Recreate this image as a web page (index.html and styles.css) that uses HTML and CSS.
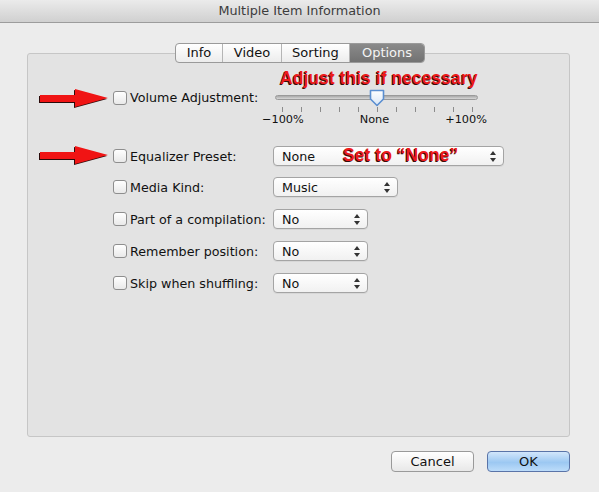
FILE: index.html
```html
<!DOCTYPE html>
<html>
<head>
<meta charset="utf-8">
<link rel="stylesheet" href="styles.css">
</head>
<body>
<div class="window">
  <div class="titlebar">Multiple Item Information</div>
  <div class="content">
    <div class="tabs">
      <div class="tab t-info">Info</div>
      <div class="tab t-video">Video</div>
      <div class="tab t-sort">Sorting</div>
      <div class="tab t-opt selected">Options</div>
    </div>
    <div class="panel">
      <div class="note note-vol">Adjust this if necessary</div>
      <div class="note note-eq">Set to “None”</div>
      <svg class="arrow arrow-1" width="72" height="22" viewBox="0 0 72 22"><path d="M2 8 L37 8 L37 2 L70 11 L37 20 L37 15 L2 15 Z" fill="#2a0a0a"/><path d="M3 7 L38 7 L38 1 L71 10 L38 19 L38 14 L3 14 Z" fill="#f01414"/></svg>
      <svg class="arrow arrow-2" width="72" height="22" viewBox="0 0 72 22"><path d="M2 8 L37 8 L37 2 L70 11 L37 20 L37 15 L2 15 Z" fill="#2a0a0a"/><path d="M3 7 L38 7 L38 1 L71 10 L38 19 L38 14 L3 14 Z" fill="#f01414"/></svg>

      <div class="row row-vol">
        <span class="check"></span>
        <span class="label">Volume Adjustment:</span>
        <div class="slider">
          <div class="track-area">
            <div class="track"></div>
            <svg class="thumb" width="18" height="18" viewBox="0 0 18 18"><defs><linearGradient id="tg" x1="0" y1="0" x2="0" y2="1"><stop offset="0" stop-color="#ffffff"/><stop offset="1" stop-color="#d8e6f6"/></linearGradient></defs><path d="M2.5 1.5 H15.5 V10 L9 16.5 L2.5 10 Z" fill="url(#tg)" stroke="#5b8fd1" stroke-width="1.6" stroke-linejoin="round"/></svg>
          </div>
          <div class="ticks">
            <i></i><i></i><i></i><i></i><i></i><i></i><i></i><i></i><i></i><i></i><i></i>
          </div>
          <div class="scale">
            <span>−100%</span><span>None</span><span>+100%</span>
          </div>
        </div>
      </div>

      <div class="row row-eq">
        <span class="check"></span>
        <span class="label">Equalizer Preset:</span>
        <div class="popup w-eq"><span>None</span><span class="updown"></span></div>
      </div>
      <div class="row">
        <span class="check"></span>
        <span class="label">Media Kind:</span>
        <div class="popup w-kind"><span>Music</span><span class="updown"></span></div>
      </div>
      <div class="row">
        <span class="check"></span>
        <span class="label">Part of a compilation:</span>
        <div class="popup w-small"><span>No</span><span class="updown"></span></div>
      </div>
      <div class="row">
        <span class="check"></span>
        <span class="label">Remember position:</span>
        <div class="popup w-small"><span>No</span><span class="updown"></span></div>
      </div>
      <div class="row">
        <span class="check"></span>
        <span class="label">Skip when shuffling:</span>
        <div class="popup w-small"><span>No</span><span class="updown"></span></div>
      </div>
    </div>
    <div class="buttons">
      <div class="btn">Cancel</div>
      <div class="btn ok">OK</div>
    </div>
  </div>
</div>
</body>
</html>
```

FILE: styles.css
```css
* { box-sizing: border-box; }
html, body { margin: 0; padding: 0; }
body {
  width: 599px;
  height: 492px;
  background: #ececec;
  font-family: "DejaVu Sans", "Noto Sans", sans-serif;
  font-size: 12.7px;
  color: #111;
  overflow: hidden;
}
.window { width: 599px; height: 492px; display: flex; flex-direction: column; }
.titlebar {
  height: 23px;
  line-height: 22px;
  text-align: center;
  font-size: 12.8px;
  color: #3c3c3c;
  background: linear-gradient(#ebebeb, #d0d0d0);
  border-bottom: 1px solid #9c9c9c;
}
.content {
  flex: 1;
  padding: 20px 29px 0 27px;
  display: flex;
  flex-direction: column;
}
.tabs {
  align-self: flex-start;
  margin-left: 148px;
  display: flex;
  height: 20px;
  border: 1px solid #9a9a9a;
  border-radius: 4px;
  background: linear-gradient(#ffffff, #ececec);
  position: relative;
  z-index: 2;
  margin-bottom: -10px;
  overflow: hidden;
  font-size: 13px;
}
.tab {
  line-height: 18px;
  text-align: center;
  border-right: 1px solid #b5b5b5;
  color: #111;
}
.t-info { width: 47px; }
.t-video { width: 59px; }
.t-sort { width: 68px; }
.t-opt { width: 74px; border-right: none; }
.tab.selected {
  background: linear-gradient(#8a8a8a, #727272);
  color: #f4f4f4;
}
.panel {
  position: relative;
  height: 384px;
  background: #e3e3e3;
  border: 1px solid #c6c6c6;
  border-radius: 3px;
  padding: 36px 0 0 85px;
  display: flex;
  flex-direction: column;
  gap: 12px;
}
.note {
  position: absolute;
  font-family: "Liberation Sans", "DejaVu Sans", sans-serif;
  font-weight: bold;
  font-size: 17.6px;
  color: #ee1a1a;
  text-shadow: -1px 1px 0 #3a0c0c;
  white-space: nowrap;
  z-index: 3;
}
.note-vol { left: 252px; top: 14px; }
.note-eq { left: 315px; top: 91px; }
.arrow { position: absolute; z-index: 3; }
.arrow-1 { left: 9px; top: 34px; }
.arrow-2 { left: 9px; top: 91px; }
.row {
  display: flex;
  align-items: center;
  height: 20px;
}
.row-eq { margin-bottom: -1px; }
.row-vol {
  height: 38px;
  align-items: flex-start;
  margin-bottom: 6px;
}
.row-vol .check { margin-top: 1px; }
.row-vol .label { line-height: 15px; }
.check {
  width: 14px;
  height: 14px;
  border: 1px solid #8e8e8e;
  border-radius: 3px;
  background: linear-gradient(#ffffff, #e9e9e9);
  flex: none;
}
.label {
  width: 146px;
  flex: none;
  padding-left: 3px;
  white-space: nowrap;
}
.slider {
  width: 240px;
  margin-left: -12px;
  display: flex;
  flex-direction: column;
}
.track-area {
  position: relative;
  height: 17px;
  margin: 0 23px 0 14px;
}
.track {
  position: absolute;
  left: 0; right: 0; top: 5px;
  height: 5px;
  border-radius: 3px;
  background: linear-gradient(#a9a9a9, #d7d7d7);
  border: 1px solid #9a9a9a;
}
.thumb { position: absolute; left: 93px; top: -1px; }
.ticks {
  display: flex;
  justify-content: space-between;
  margin: 0 28px 0 21px;
  height: 6px;
}
.ticks i {
  width: 1px;
  height: 5px;
  background: #8c8c8c;
}
.scale {
  display: flex;
  justify-content: space-between;
  font-size: 11.3px;
  line-height: 13px;
  padding: 0 14px 0 1px;
}
.popup {
  height: 20px;
  border: 1px solid #a4a4a4;
  border-radius: 4px;
  background: linear-gradient(#ffffff, #f1f1f1);
  display: flex;
  align-items: center;
  justify-content: space-between;
  padding: 0 6px 0 8px;
  box-shadow: 0 1px 0 rgba(0,0,0,0.05);
}
.w-eq { width: 231px; }
.w-kind { width: 125px; }
.w-small { width: 95px; }
.updown {
  width: 7px;
  height: 11px;
  position: relative;
}
.updown::before, .updown::after {
  content: "";
  position: absolute;
  left: 0;
  border-left: 3.5px solid transparent;
  border-right: 3.5px solid transparent;
}
.updown::before { top: 0; border-bottom: 4px solid #333; }
.updown::after { bottom: 0; border-top: 4px solid #333; }
.buttons {
  display: flex;
  justify-content: flex-end;
  gap: 13px;
  margin-top: 14px;
}
.btn {
  width: 83px;
  height: 21px;
  border: 1px solid #9a9a9a;
  border-radius: 4px;
  background: linear-gradient(#ffffff, #e8e8e8);
  text-align: center;
  line-height: 19px;
  font-size: 13px;
}
.btn.ok {
  border-color: #5a74a8;
  background: linear-gradient(#d2e6fb, #9cc8f2 55%, #bcdcfa);
}
```
